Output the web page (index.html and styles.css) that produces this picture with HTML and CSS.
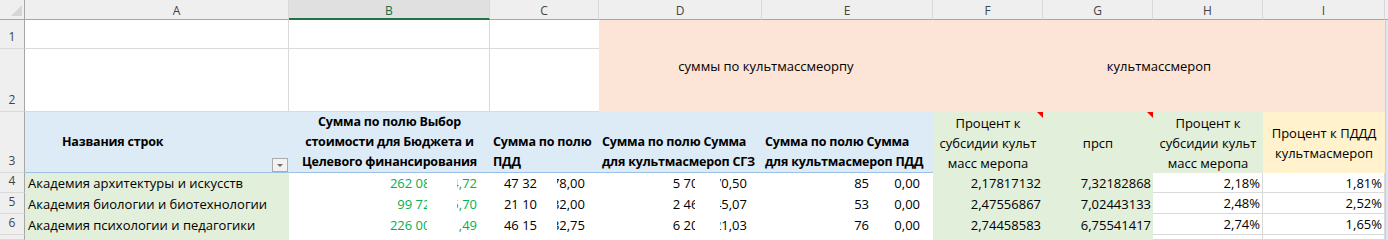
FILE: index.html
```html
<!DOCTYPE html>
<html lang="ru">
<head>
<meta charset="utf-8">
<title>Сводная таблица</title>
<link rel="stylesheet" href="styles.css">
</head>
<body>
<div class="sheet">
  <!-- column headers -->
  <div class="corner"><svg width="24" height="19" viewBox="0 0 24 19"><polygon points="22,5 22,16 11,16" fill="#d6d6d6"/></svg></div>
  <div class="ch ch-a">A</div>
  <div class="ch sel">B</div>
  <div class="ch">C</div>
  <div class="ch">D</div>
  <div class="ch">E</div>
  <div class="ch">F</div>
  <div class="ch">G</div>
  <div class="ch">H</div>
  <div class="ch">I</div>
  <div class="ch chj"></div>

  <!-- row 1 -->
  <div class="rh">1</div>
  <div class="w"></div>
  <div class="w"></div>
  <div class="wb"></div>
  <div class="peach m-de">суммы по культмассмеорпу</div>
  <div class="peach m-fi">культмассмероп</div>
  <div class="j"></div>

  <!-- row 2 -->
  <div class="rh">2</div>
  <div class="w"></div>
  <div class="w"></div>
  <div class="wb"></div>
  <div class="j"></div>

  <!-- row 3 -->
  <div class="rh">3</div>
  <div class="hb ha">Названия строк<svg class="filter" width="16" height="14" viewBox="0 0 16 14"><rect x="0.5" y="0.5" width="15" height="13" fill="#f2f2f2" stroke="#ababab"/><polygon points="5,6 11,6 8,9" fill="#707070"/></svg></div>
  <div class="hb hcen">Сумма по полю Выбор<br>стоимости для Бюджета и<br>Целевого финансирования</div>
  <div class="hb">Сумма по полю<br>ПДД</div>
  <div class="hb">Сумма по полю Сумма<br>для культмасмероп СГЗ</div>
  <div class="hb">Сумма по полю Сумма<br>для культмасмероп ПДД</div>
  <div class="hg cmt">Процент к<br>субсидии культ<br>масс меропа</div>
  <div class="hg cmt">прсп</div>
  <div class="hg">Процент к<br>субсидии культ<br>масс меропа</div>
  <div class="hy">Процент к ПДДД<br>культмасмероп</div>
  <div class="j"></div>

  <!-- row 4 -->
  <div class="rh">4</div>
  <div class="ta">Академия архитектуры и искусств</div>
  <div class="num nb"><span class="fl">262 0<span class="cut">8</span></span><span class="fr">4,72</span></div>
  <div class="num nc"><span class="fl">47 32</span><span class="fr">78,00</span></div>
  <div class="num nd"><span class="fl">5 7<span class="cut">0</span></span><span class="fr">70,50</span></div>
  <div class="num ne"><span class="fl">85</span><span class="fr">0,00</span></div>
  <div class="ng">2,17817132</div>
  <div class="ng">7,32182868</div>
  <div class="np">2,18%</div>
  <div class="np">1,81%</div>
  <div class="j"></div>

  <!-- row 5 -->
  <div class="rh">5</div>
  <div class="ta">Академия биологии и биотехнологии</div>
  <div class="num nb"><span class="fl">99 7<span class="cut">2</span></span><span class="fr">5,70</span></div>
  <div class="num nc"><span class="fl">21 10</span><span class="fr">32,00</span></div>
  <div class="num nd"><span class="fl">2 4<span class="cut">6</span></span><span class="fr">45,07</span></div>
  <div class="num ne"><span class="fl">53</span><span class="fr">0,00</span></div>
  <div class="ng">2,47556867</div>
  <div class="ng">7,02443133</div>
  <div class="np">2,48%</div>
  <div class="np">2,52%</div>
  <div class="j"></div>

  <!-- row 6 -->
  <div class="rh">6</div>
  <div class="ta">Академия психологии и педагогики</div>
  <div class="num nb"><span class="fl">226 0<span class="cut">0</span></span><span class="fr">1,49</span></div>
  <div class="num nc"><span class="fl">46 15</span><span class="fr">32,75</span></div>
  <div class="num nd"><span class="fl">6 2<span class="cut">0</span></span><span class="fr">21,03</span></div>
  <div class="num ne"><span class="fl">76</span><span class="fr">0,00</span></div>
  <div class="ng">2,74458583</div>
  <div class="ng">6,75541417</div>
  <div class="np">2,74%</div>
  <div class="np">1,65%</div>
  <div class="j"></div>

  <!-- row 7 (partly visible) -->
  <div class="rh"></div>
  <div class="ta"></div>
  <div class="wn"></div>
  <div class="wn"></div>
  <div class="wn"></div>
  <div class="wn"></div>
  <div class="ng"></div>
  <div class="ng"></div>
  <div class="np"></div>
  <div class="np"></div>
  <div class="j"></div>
</div>
</body>
</html>
```

FILE: styles.css
```css
* { box-sizing: border-box; }

body {
  margin: 0;
  background: #fff;
  font-family: "Open Sans", "Liberation Sans", sans-serif;
  font-size: 13px;
  color: #000;
}

.sheet {
  display: grid;
  grid-template-columns: 25px 264px 201px 109px 163px 171px 110px 110px 110px 122px 3px;
  grid-template-rows: 20px 29px 63px 61px 20px 21px 21px 5px;
  width: 1388px;
  height: 240px;
  overflow: hidden;
}

.sheet > div {
  overflow: hidden;
  white-space: nowrap;
}

/* headers */
.corner {
  background: #efefef;
  border-right: 1px solid #a6a6a6;
  border-bottom: 1px solid #a6a6a6;
}
.corner svg { display: block; }

.ch {
  background: #efefef;
  border-right: 1px solid #d9d9d9;
  border-bottom: 1px solid #a6a6a6;
  color: #444;
  font-size: 12px;
  display: flex;
  align-items: center;
  justify-content: center;
  padding-top: 2px;
}
.ch-a { padding-left: 40px; }
.ch.sel {
  background: #e0e0e0;
  border-bottom: 2px solid #217346;
  color: #1e6b41;
  padding-top: 3px;
}
.chj { border-right: none; }

.rh {
  background: #efefef;
  border-right: 1px solid #a6a6a6;
  border-bottom: 1px solid #d9d9d9;
  color: #444;
  font-size: 12px;
  line-height: 20px;
  display: flex;
  align-items: flex-end;
  justify-content: center;
  padding-bottom: 1px;
}

/* plain cells */
.w {
  background: #fff;
  border-right: 1px solid #dadada;
  border-bottom: 1px solid #dadada;
}
.wb {
  background: #fff;
  border-bottom: 1px solid #dadada;
}
.wn { background: #fff; }
.j {
  background: #dfe4f2;
  border-left: 1px solid #cfcfcf;
}

/* merged peach header */
.peach {
  background: #fce4d6;
  display: flex;
  align-items: center;
  justify-content: center;
}
.m-de { grid-column: span 2; grid-row: span 2; }
.m-fi { grid-column: span 4; grid-row: span 2; }

/* pivot header row */
.hb {
  background: #ddebf7;
  border-bottom: 1px solid #9bc2e6;
  font-weight: 700;
  font-size: 12.5px;
  letter-spacing: -0.2px;
  line-height: 20px;
  display: flex;
  align-items: flex-end;
  padding-left: 3px;
}
.ha {
  position: relative;
  align-items: center;
  padding-left: 37px;
}
.hcen {
  justify-content: center;
  text-align: center;
  padding-left: 0;
}
.filter {
  position: absolute;
  right: 1px;
  bottom: 0;
  display: block;
}
.hg, .hy {
  background: #e2efda;
  line-height: 20px;
  display: flex;
  align-items: center;
  justify-content: center;
  text-align: center;
}
.hy { background: #fff2cc; }
.cmt { position: relative; }
.cmt::after {
  content: "";
  position: absolute;
  top: 0;
  right: 0;
  border-top: 6px solid #ff0000;
  border-left: 6px solid transparent;
}

/* data rows */
.ta {
  background: #e2efda;
  display: flex;
  align-items: center;
  padding-left: 3px;
  line-height: 20px;
}
.num {
  background: #fff;
  display: flex;
  align-items: center;
  justify-content: flex-end;
  line-height: 20px;
}
.fl { flex: none; }
.fr {
  flex: none;
  display: flex;
  justify-content: flex-end;
  overflow: hidden;
}
.cut {
  display: inline-block;
  width: 4px;
  overflow: hidden;
  vertical-align: top;
}
.nb { padding-right: 13px; color: #00b050; }
.nb .fr { width: 20px; }
.nb .fl { margin-right: 30px; }
.nc { padding-right: 14px; }
.nc .fr { width: 28px; }
.nc .fl { margin-right: 20px; }
.nd { padding-right: 15px; }
.nd .fr { width: 27px; }
.nd .fl { margin-right: 25px; }
.ne { padding-right: 13px; }
.ne .fr { width: 26px; }
.ne .fl { margin-right: 25px; }

.ng {
  background: #e2efda;
  display: flex;
  align-items: center;
  justify-content: flex-end;
  padding-right: 2px;
  line-height: 20px;
}
.np {
  background: #fff;
  border-right: 1px solid #dadada;
  border-bottom: 1px solid #dadada;
  display: flex;
  align-items: center;
  justify-content: flex-end;
  padding-right: 2px;
  line-height: 20px;
}
```
